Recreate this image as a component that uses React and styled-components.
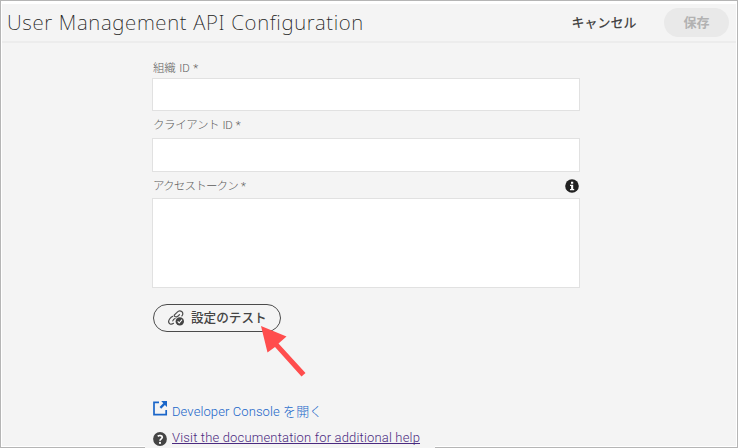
import React from "react";
import styled, { createGlobalStyle } from "styled-components";

const GlobalStyle = createGlobalStyle`
  *, *::before, *::after { box-sizing: border-box; }
  body { margin: 0; background: #f4f4f4; }
`;

const Frame = styled.div`
  position: relative;
  width: 738px;
  height: 448px;
  display: flex;
  flex-direction: column;
  border: 1px solid #b5b5b5;
  background: #f4f4f4;
  box-shadow: inset 0 0 0 1px #fff;
  font-family: Roboto, "Noto Sans CJK JP", sans-serif;
  color: #4b4b4b;
`;

const FrameGap = styled.div`
  position: absolute;
  left: 144px;
  bottom: -1px;
  width: 290px;
  height: 2px;
  background: #f4f4f4;
  z-index: 0;
`;

const Surface = styled.div`
  display: flex;
  flex-direction: column;
  position: relative;
  z-index: 1;
`;

const TopBar = styled.header`
  display: flex;
  flex: none;
  align-items: center;
  height: 42px;
  margin: 0 1px;
  padding: 0 7px 0 5px;
  border-top: 3px solid #fff;
  border-bottom: 2px solid #ececec;
`;

const Title = styled.h1`
  flex: 1;
  margin: 0;
  padding-bottom: 1px;
  font-family: "Noto Sans", sans-serif;
  font-size: 20.5px;
  line-height: 27px;
  font-weight: 200;
  letter-spacing: 0.67px;
  color: #222;
  white-space: nowrap;
`;

const BarButton = styled.button`
  height: 29px;
  width: ${(p) => p.$width}px;
  margin: 0 0 0 ${(p) => p.$gap || 0}px;
  padding: 0 0 2px;
  border: 0;
  border-radius: 15px;
  background: ${(p) => (p.$disabled ? "#e9e9e9" : "transparent")};
  color: ${(p) => (p.$disabled ? "#b2b2b2" : "#444")};
  font: ${(p) => (p.$disabled ? 700 : 500)} 13px/27px "Noto Sans CJK JP", sans-serif;
  white-space: nowrap;
`;

const Form = styled.main`
  display: flex;
  flex-direction: column;
  align-items: flex-start;
  width: 428px;
  margin-left: 151px;
`;

const LabelRow = styled.div`
  display: flex;
  align-items: center;
  justify-content: space-between;
  width: 100%;
  height: ${(p) => p.$height}px;
  padding: ${(p) => p.$top}px 1px 0;
`;

const Label = styled.label`
  font-size: 11.5px;
  line-height: 16px;
  font-weight: 300;
  letter-spacing: ${(p) => p.$spacing || 0}px;
  word-spacing: 1px;
  color: #5c5c5c;
  white-space: nowrap;
`;

const Input = styled.input`
  display: block;
  width: 100%;
  height: ${(p) => p.$height}px;
  border: 1px solid #e1e1e1;
  background: #fff;
`;

const TextArea = styled.textarea`
  display: block;
  width: 100%;
  height: 90px;
  border: 1px solid #e1e1e1;
  background: #fff;
  resize: none;
`;

const TestButton = styled.button`
  display: flex;
  align-items: center;
  gap: 6px;
  width: 128px;
  height: 28px;
  margin: 16px 0 0 1px;
  padding: 0 0 0 14px;
  border: 1px solid #4b4b4b;
  border-radius: 14px;
  background: transparent;
  color: #444;
  font: 500 12.6px/24px "Noto Sans CJK JP", sans-serif;
  white-space: nowrap;
`;

const ButtonText = styled.span`
  padding-bottom: 2px;
`;

const Links = styled.nav`
  display: flex;
  flex-direction: column;
  gap: 6px;
  margin: 70px 0 0 1px;
`;

const LinkRow = styled.div`
  display: flex;
  align-items: center;
  gap: 4px;
  height: 20px;

  svg { flex: none; margin-top: ${(p) => p.$drop || 0}px; }
`;

const Link = styled.a`
  font-size: 13px;
  line-height: 20px;
  font-weight: 300;
  letter-spacing: ${(p) => p.$spacing}px;
  color: ${(p) => (p.$visited ? "#4b2a80" : "#1a66c9")};
  text-decoration: ${(p) => (p.$visited ? "underline" : "none")};
  text-decoration-thickness: 1px;
  text-underline-offset: 1px;
  text-decoration-skip-ink: none;
  white-space: nowrap;
`;

const PointerArrow = styled.svg`
  position: absolute;
  left: 254px;
  top: 319px;
  z-index: 2;
`;

const InfoIcon = () => (
  <svg width="14" height="14" viewBox="0 0 14 14">
    <circle cx="7" cy="7" r="6.8" fill="#222" />
    <path d="M6 2.7h2.2v2H6zM5 5.7h3.2v4.2h1v1.4H5V9.9h1.1V7.1H5z" fill="#fff" />
  </svg>
);

const LinkCheckIcon = () => (
  <svg width="17" height="16" viewBox="0 0 17 16" fill="none">
    <g stroke="#4b4b4b" strokeWidth="1.2" strokeLinecap="round">
      <path d="M6.2 5.2 9 2.4c1.4-1.5 3.4-1.8 4.7-.8 1.5 1.1 1.4 2.9.2 4.3" />
      <path d="M6.4 5.5c0 1.4 1.8 1.7 3 .9.9-.5 1.5-1.1 2.1-1.8" />
      <path d="M4.8 6.3C3.5 6.8 2.5 7.8 1.6 9c-1.3 2-1 3.9.2 4.7 1.2.7 2.6.4 3.7-.4" />
      <path d="M4.8 10.9c.4-1.3 1.2-2 2.3-2.4" />
    </g>
    <circle cx="11.8" cy="11.4" r="4.2" fill="#444" />
    <path d="m9.7 11.4 1.5 1.6 2.8-3.3" stroke="#fff" strokeWidth="1.1" />
  </svg>
);

const OpenIcon = () => (
  <svg width="15" height="15" viewBox="0 0 15 15" fill="none">
    <path d="M6 1.4H1v12.2h12.2V9" stroke="#1a66c9" strokeWidth="1.7" />
    <path d="M8.2 0H14v6l-2.1-2.1-3.7 3.8-1.6-1.6 3.7-3.8z" fill="#1a66c9" />
  </svg>
);

const HelpIcon = () => (
  <svg width="15" height="14" viewBox="0 0 15 14" fill="none">
    <circle cx="7" cy="7" r="6.9" fill="#444" />
    <path d="M4.7 4.2c1.7-1.2 4.6-.8 4.6 1.1C9.3 6.8 7 6.9 7 8.7" stroke="#fff" strokeWidth="1.7" />
    <circle cx="7" cy="10.9" r="1.1" fill="#fff" />
  </svg>
);

export default function App() {
  return (
    <>
      <GlobalStyle />
      <Frame>
        <Surface>
          <TopBar>
            <Title>User Management API Configuration</Title>
            <BarButton $width={78}>キャンセル</BarButton>
            <BarButton $width={65} $gap={21} $disabled disabled>保存</BarButton>
          </TopBar>
          <Form>
            <LabelRow $height={35} $top={14}>
              <Label htmlFor="org" $spacing={-0.15}>組織 ID *</Label>
            </LabelRow>
            <Input id="org" $height={33} />
            <LabelRow $height={27} $top={1}>
              <Label htmlFor="client" $spacing={-0.4}>クライアント ID *</Label>
            </LabelRow>
            <Input id="client" $height={34} />
            <LabelRow $height={26} $top={2}>
              <Label htmlFor="token" $spacing={-0.8}>アクセストークン *</Label>
              <InfoIcon />
            </LabelRow>
            <TextArea id="token" />
            <TestButton>
              <LinkCheckIcon />
              <ButtonText>設定のテスト</ButtonText>
            </TestButton>
            <Links>
              <LinkRow $drop={-8}>
                <OpenIcon />
                <Link $spacing={0.1}>Developer Console を開く</Link>
              </LinkRow>
              <LinkRow $drop={1}>
                <HelpIcon />
                <Link $visited $spacing={0.17}>Visit the documentation for additional help</Link>
              </LinkRow>
            </Links>
          </Form>
        </Surface>
        <FrameGap />
        <PointerArrow width="52" height="60" viewBox="255 320 52 60">
          <path d="M261 326 286.5 336.5 278.5 343.5 305.5 373 301.5 376.5 275 347 267.5 352.5Z" fill="#ff4d4d" />
        </PointerArrow>
      </Frame>
    </>
  );
}
